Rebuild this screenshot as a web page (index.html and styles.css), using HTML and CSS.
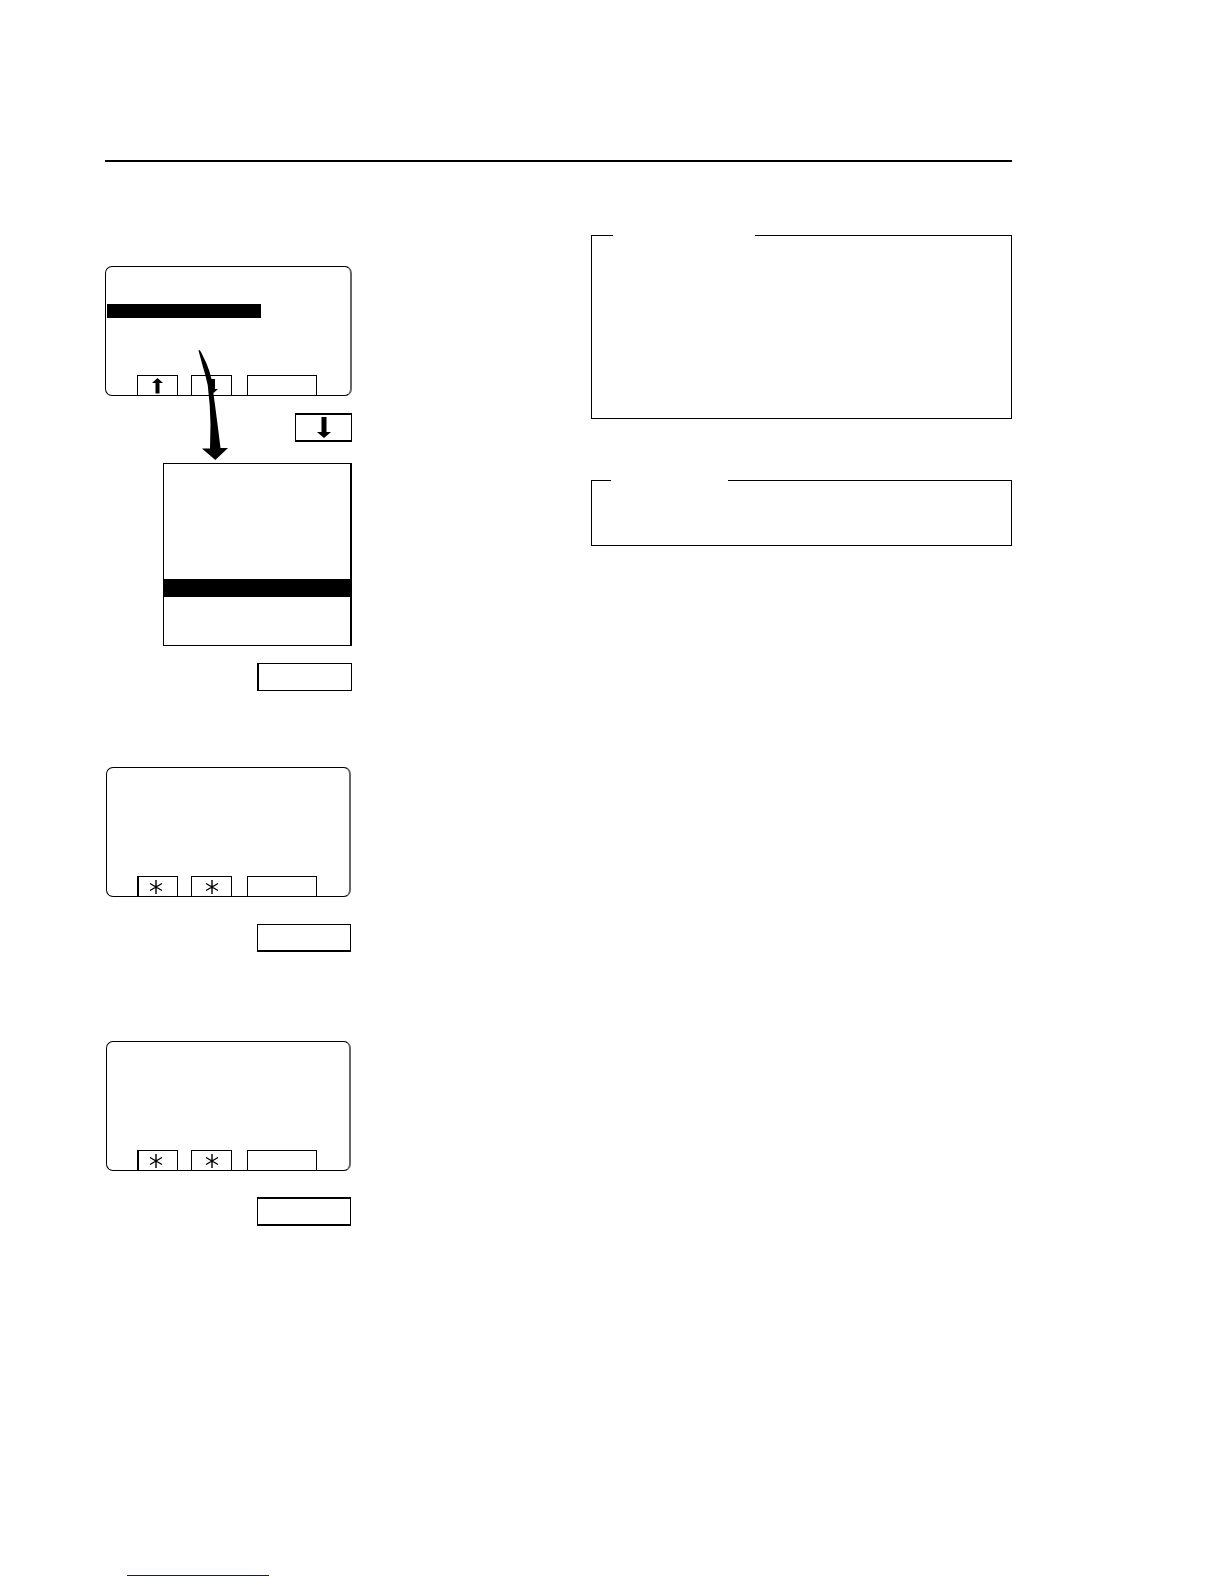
FILE: index.html
```html
<!DOCTYPE html>
<html lang="en">
<head>
    <meta charset="UTF-8">
    <meta name="viewport" content="width=device-width, initial-scale=1.0">
    <title>Display menu</title>
    <link rel="stylesheet" href="styles.css">
</head>
<body>

    <header class="page-header"></header>

    <main class="columns">
        <div class="steps">
            <section class="step">
                <div class="screen">
                    <div class="highlight"></div>
                    <div class="keys">
                        <button class="key" aria-label="Up">
                            <svg width="11" height="16" viewBox="0 0 11 16"><path d="M5.5 0 L11 5 H7.5 V15.5 H3.5 V5 H0 Z"/></svg>
                        </button>
                        <button class="key" aria-label="Down">
                            <svg width="12" height="16" viewBox="0 0 12 16"><path d="M4 1 H9 V11 H12 L7.5 15 L3 11 H4 Z"/></svg>
                        </button>
                        <button class="key key-wide" aria-label="Select"></button>
                    </div>
                    <svg class="pointer" width="28" height="112" viewBox="0 0 28 112">
                        <path d="M-2.5 1 L-3.5 1.5 L0.7 17 L3.3 26 L5.7 36 L6.7 46 L7.7 56 L8.5 75 L8 99.5 H0 L13.3 111 L26 99 H18.5 L16 79 L13 56 L11.5 45 L9.5 30 L7.5 22.5 L4.3 14 L-1 3 Z"/>
                    </svg>
                </div>
                <button class="button button-small" aria-label="Down">
                    <svg width="14" height="21" viewBox="0 0 14 21"><path d="M4.5 0 H9.5 V15 H14 L7 21 L0 15 H4.5 Z"/></svg>
                </button>
                <div class="menu">
                    <div class="menu-selected"></div>
                </div>
                <button class="button button-left" aria-label="Select"></button>
            </section>

            <section class="step">
                <div class="screen">
                    <div class="keys">
                        <button class="key" aria-label="Left">
                            <svg width="18" height="14" viewBox="-7 -7 18 14"><path class="star" d="M0 -7 V7 M-6 -3.5 L6 3.5 M-6 3.5 L6 -3.5"/></svg>
                        </button>
                        <button class="key" aria-label="Right">
                            <svg width="14" height="14" viewBox="-7 -7 14 14"><path class="star" d="M0 -7 V7 M-6 -3.5 L6 3.5 M-6 3.5 L6 -3.5"/></svg>
                        </button>
                        <button class="key key-wide" aria-label="Select"></button>
                    </div>
                </div>
                <button class="button" aria-label="Select"></button>
            </section>

            <section class="step">
                <div class="screen">
                    <div class="keys">
                        <button class="key" aria-label="Left">
                            <svg width="18" height="14" viewBox="-7 -7 18 14"><path class="star" d="M0 -7 V7 M-6 -3.5 L6 3.5 M-6 3.5 L6 -3.5"/></svg>
                        </button>
                        <button class="key" aria-label="Right">
                            <svg width="14" height="14" viewBox="-7 -7 14 14"><path class="star" d="M0 -7 V7 M-6 -3.5 L6 3.5 M-6 3.5 L6 -3.5"/></svg>
                        </button>
                        <button class="key key-wide" aria-label="Select"></button>
                    </div>
                </div>
                <button class="button button-top" aria-label="Select"></button>
            </section>
        </div>

        <div class="notes">
            <fieldset class="note">
                <legend></legend>
            </fieldset>
            <fieldset class="note note-short">
                <legend></legend>
            </fieldset>
        </div>
    </main>

    <footer class="page-footer">
        <a class="footer-link" href="#" aria-label="Top of page"></a>
    </footer>

</body>
</html>
```

FILE: styles.css
```css
* {
    box-sizing: border-box;
}
body {
    font-family: "Liberation Sans", Arial, sans-serif;
    margin: 0;
    padding: 160px 212px 8px 105px;
    background-color: #fff;
}
.page-header {
    border-top: 2px solid #000;
}
.columns {
    display: grid;
    grid-template-columns: 247px minmax(0, 421px);
    justify-content: space-between;
    align-items: start;
}
.steps {
    padding-top: 104px;
}
.step {
    display: flex;
    flex-direction: column;
    align-items: flex-end;
}
.step + .step {
    padding: 0 1px;
    margin-top: 76px;
}
.step + .step + .step {
    margin-top: 89px;
}

/* LCD screens */
.screen {
    position: relative;
    display: flex;
    flex-direction: column;
    width: 100%;
    height: 130px;
    border: 1px solid #000;
    border-right: 2px solid #666;
    border-radius: 7px;
}
.highlight {
    width: 154px;
    height: 14px;
    margin: 37px 0 0 1px;
    background-color: #000;
}
.keys {
    display: flex;
    margin-top: auto;
    padding-left: 31px;
}
.step + .step .keys {
    padding-left: 30px;
}
.key {
    display: flex;
    justify-content: center;
    align-items: center;
    width: 41px;
    height: 20px;
    margin-right: 13px;
    padding: 0;
    border: 1px solid #000;
    border-bottom: none;
    background-color: #fff;
}
.step + .step .key:first-child {
    border-left-width: 2px;
}
.key-wide {
    width: 70px;
    margin: 0 0 0 2px;
}
.star {
    fill: none;
    stroke: #000;
    stroke-width: 1.4;
}
.pointer {
    position: absolute;
    top: 82px;
    left: 96px;
    overflow: visible;
}

/* Buttons below the screens */
.button {
    display: flex;
    justify-content: center;
    align-items: center;
    width: 94px;
    height: 28px;
    margin-top: 27px;
    padding: 0;
    border: 1px solid #000;
    border-bottom-width: 2px;
    background-color: #fff;
}
.button-top {
    height: 29px;
    margin-top: 26px;
    border-top-width: 2px;
}
.button-small {
    width: 57px;
    height: 29px;
    margin-top: 17px;
    border-top-width: 2px;
}
.button-left {
    width: 95px;
    margin-top: 17px;
    border-bottom-width: 1px;
    border-left-width: 2px;
}
.menu {
    width: 189px;
    height: 183px;
    margin-top: 21px;
    padding-top: 115px;
    border: 1px solid #000;
    border-right-width: 2px;
}
.menu-selected {
    height: 18px;
    background-color: #000;
}

/* Notes */
.notes {
    padding-top: 73px;
}
.note {
    height: 184px;
    margin: 0 0 61px;
    padding: 0 0 0 21px;
    border: 1px solid #000;
}
.note legend {
    width: 142px;
    height: 1px;
    padding: 0;
}
.note-short {
    height: 66px;
    margin: 0;
    padding-left: 19px;
}
.note-short legend {
    width: 117px;
}

.page-footer {
    margin-top: 349px;
    padding-left: 22px;
}
.footer-link {
    display: block;
    width: 142px;
    border-bottom: 1px solid #10108c;
}
```
